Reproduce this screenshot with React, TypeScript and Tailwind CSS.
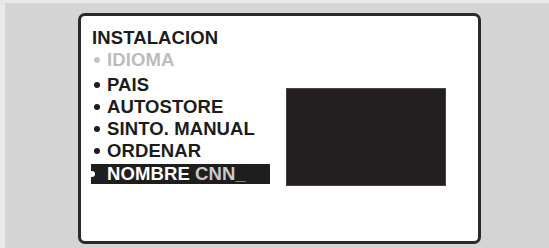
import React from "react";

const font = { fontFamily: '"Liberation Sans", Arial, Helvetica, sans-serif' };

function Item({ label, dim }: { label: string; dim?: boolean }) {
  return (
    <div className={`flex items-center h-[22px] ${dim ? "text-[#bcbcbc]" : "text-[#1c1c1c]"}`}>
      <span className={`w-[6px] h-[6px] rounded-full ml-[2px] mr-[7px] ${dim ? "bg-[#c4c4c4]" : "bg-[#1c1c1c]"}`} />
      <span>{label}</span>
    </div>
  );
}

export default function App() {
  return (
    <div
      className="w-[549px] h-[248px] bg-[#d4d4d4] border-t-[3px] border-l-[5px] border-[#e9e9e9] overflow-hidden"
      style={font}
    >
      <div className="ml-[73px] mt-[10px] w-[403px] h-[231px] bg-white border-[3px] border-[#2a2a2a] rounded-[7px] pl-[11px] pt-[11px] flex items-start">
        <div className="w-[194px] flex flex-col text-[18.5px] font-bold leading-[22px] tracking-[0.1px]">
          <div className="h-[22px] text-[#1c1c1c]">INSTALACION</div>
          <div className="mb-[3px]">
            <Item label="IDIOMA" dim />
          </div>
          <Item label="PAIS" />
          <Item label="AUTOSTORE" />
          <Item label="SINTO. MANUAL" />
          <Item label="ORDENAR" />
          <div className="relative mt-[2px] ml-[-1px] w-[179px] h-[20px] bg-[#1e1e1e] pl-[16px] leading-[20px] whitespace-nowrap">
            <span className="absolute left-[-2px] top-[7px] w-[6px] h-[6px] rounded-full bg-white" />
            <span className="text-white">NOMBRE</span>
            <span className="text-[#c9c9c9]"> CNN_</span>
          </div>
        </div>
        <div className="mt-[61px] w-[160px] h-[98px] bg-[#231f20] border border-[#444]" />
      </div>
    </div>
  );
}
